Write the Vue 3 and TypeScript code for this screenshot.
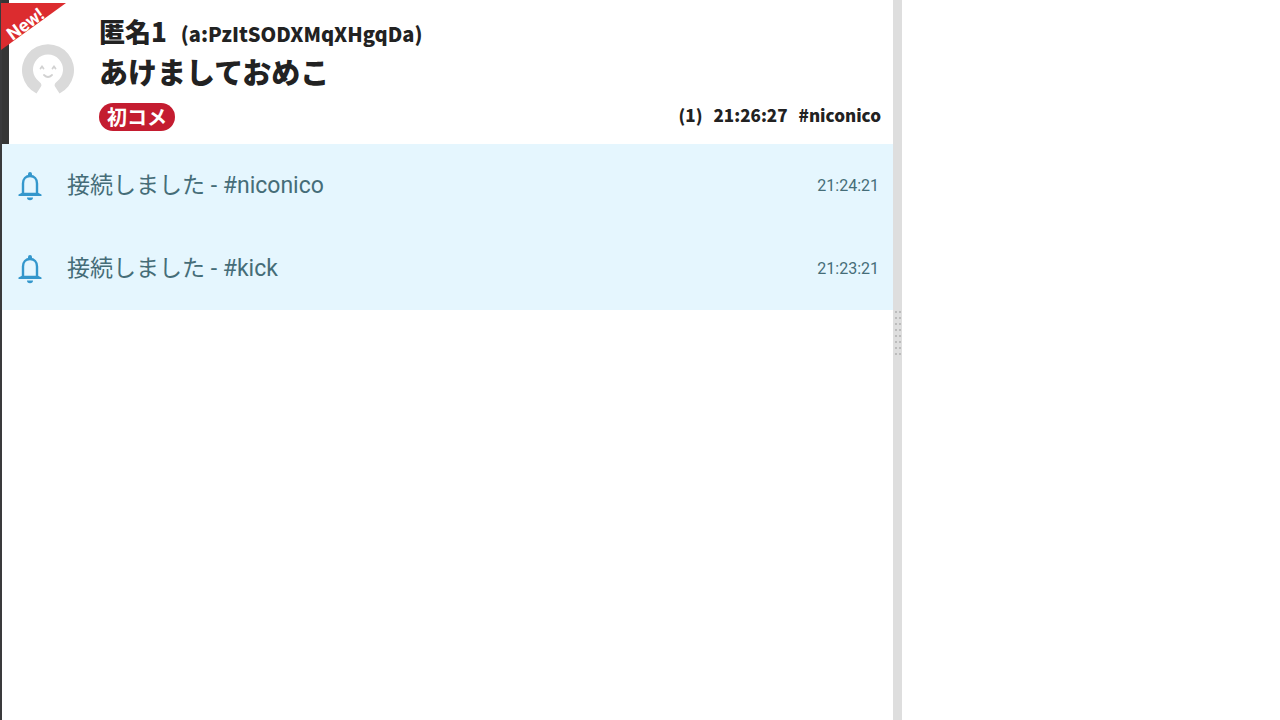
<script setup lang="ts">
interface Notice {
  id: number
  text: string
  time: string
}

const comment = {
  name: '匿名1',
  userId: '(a:PzItSODXMqXHgqDa)',
  body: 'あけましておめこ',
  badge: '初コメ',
  count: '(1)',
  time: '21:26:27',
  channel: '#niconico',
}

const notices: Notice[] = [
  { id: 1, text: '接続しました - #niconico', time: '21:24:21' },
  { id: 2, text: '接続しました - #kick', time: '21:23:21' },
]
</script>

<template>
  <div class="app">
    <main class="feed">
      <article class="comment">
        <svg class="ribbon" viewBox="0 0 66 52" aria-label="New!">
          <path d="M0 3H65L0 50Z" fill="#dc2c2f" />
          <text class="ribbon-text" x="28" y="29" text-anchor="middle" transform="rotate(-36 28 29)">New!</text>
        </svg>
        <svg class="avatar" viewBox="0 0 52 52" aria-hidden="true">
          <path d="M14.500 49.500A26 26 0 1 1 37.500 49.500L33 42.500Q31.500 40 35 37.500A15 15 0 1 0 17 37.500Q20.500 40 19 42.500Z" fill="#dadada" />
          <g fill="none" stroke="#d2d2d2" stroke-width="1.800" stroke-linecap="round">
            <path d="M18.500 24.500L20 22.500L21.500 24.500M30.500 24.500L32 22.500L33.500 24.500M22 31Q26 35 30 31" />
          </g>
        </svg>
        <div class="content">
          <header class="author">
            <span class="name">{{ comment.name }}</span>
            <span class="user-id">{{ comment.userId }}</span>
          </header>
          <p class="body">{{ comment.body }}</p>
          <footer class="details">
            <span class="badge">{{ comment.badge }}</span>
            <span class="meta">
              <span>{{ comment.count }}</span>
              <time>{{ comment.time }}</time>
              <span>{{ comment.channel }}</span>
            </span>
          </footer>
        </div>
      </article>
      <div v-for="notice in notices" :key="notice.id" class="notice">
        <svg class="bell" viewBox="0 0 26 30" aria-hidden="true">
          <path d="M6 23V12.500C6 8 8.800 5 13 5S20 8 20 12.500V23" fill="none" stroke="#3497cc" stroke-width="2.400" />
          <path d="M11 5V3A2 2 0 0 1 15 3V5ZM1.500 25V23.500L5 21.800H21L24.500 23.500V25ZM10 26.500H16A3 2.800 0 0 1 10 26.500Z" fill="#3497cc" />
        </svg>
        <span class="notice-text">{{ notice.text }}</span>
        <time class="notice-time">{{ notice.time }}</time>
      </div>
    </main>
    <div class="splitter" role="separator" aria-orientation="vertical">
      <svg class="grip" viewBox="0 0 8 50" aria-hidden="true">
        <g fill="#bcbcbc">
          <template v-for="row in 8" :key="row">
            <rect x="1" :y="row * 6 - 4" width="2" height="2" />
            <rect x="5" :y="row * 6 - 4" width="2" height="2" />
          </template>
        </g>
      </svg>
    </div>
    <aside class="side"></aside>
  </div>
</template>

<style>
body {
  margin: 0;
  background: #fff;
}
</style>

<style scoped>
.app {
  display: grid;
  grid-template-columns: minmax(0, 893fr) 9px minmax(0, 378fr);
  min-height: 100vh;
  font-family: Roboto, "Noto Sans CJK JP", sans-serif;
}

.feed {
  border-left: 2px solid #3a3a3c;
}

.comment {
  position: relative;
  display: flex;
  gap: 25px;
  box-sizing: border-box;
  min-height: 144px;
  padding: 15px 12px 12px 13px;
  border-left: 7px solid #363636;
  color: #222;
  font-family: "Noto Sans CJK JP", sans-serif;
  font-weight: 700;
}

.ribbon {
  position: absolute;
  top: 0;
  left: -8px;
  width: 66px;
  height: 52px;
}

.ribbon-text {
  fill: #fff;
  font: 700 18px Roboto, sans-serif;
}

.avatar {
  flex: none;
  width: 52px;
  height: 52px;
  margin-top: 29px;
}

.content {
  flex: 1;
  min-width: 0;
}

.author {
  display: flex;
  align-items: baseline;
  gap: 14px;
  line-height: 32px;
}

.name {
  font-size: 26px;
  font-weight: 900;
}

.user-id {
  font-size: 20px;
  font-weight: 900;
}

.body {
  margin: 3px 0 14px;
  font-size: 29px;
  font-weight: 900;
  line-height: 36px;
}

.details {
  display: flex;
  align-items: flex-start;
  justify-content: space-between;
}

.badge {
  padding: 0 8px;
  border-radius: 14px;
  background: #c41c30;
  color: #fff;
  font-size: 20px;
  line-height: 28px;
}

.meta {
  display: flex;
  gap: 11px;
  font-size: 17px;
  font-weight: 900;
  line-height: 24px;
}

.notice {
  display: flex;
  align-items: center;
  gap: 24px;
  box-sizing: border-box;
  min-height: 83px;
  padding: 0 14px 0 15px;
  background: #e5f6fe;
  color: #456d78;
}

.bell {
  flex: none;
  width: 26px;
  height: 30px;
}

.notice-text {
  flex: 1;
  font-size: 23px;
  line-height: 32px;
}

.notice-time {
  font-size: 16px;
  line-height: 24px;
}

.splitter {
  padding-top: 309px;
  background: #dedede;
  cursor: col-resize;
}

.grip {
  display: block;
  width: 8px;
  height: 50px;
  margin-left: 1px;
}
</style>
